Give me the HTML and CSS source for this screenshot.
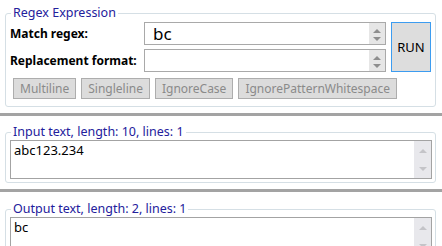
FILE: index.html
```html
<!DOCTYPE html>
<html lang="en">
<head>
    <meta charset="UTF-8">
    <meta name="viewport" content="width=device-width, initial-scale=1.0">
    <title>Regex Tester</title>
    <link rel="stylesheet" href="styles.css">
</head>
<body>
    <div class="pane pane-regex">
        <fieldset class="group">
            <legend>Regex Expression</legend>
            <div class="regex-grid">
                <label class="field-label">Match regex:</label>
                <div class="spin-box">
                    <span class="spin-text big">bc</span>
                    <div class="spinner">
                        <span class="arrow up"></span>
                        <span class="arrow down"></span>
                    </div>
                </div>
                <button class="run">RUN</button>
                <label class="field-label">Replacement format:</label>
                <div class="spin-box">
                    <span class="spin-text"></span>
                    <div class="spinner">
                        <span class="arrow up"></span>
                        <span class="arrow down"></span>
                    </div>
                </div>
            </div>
            <div class="options">
                <button disabled>Multiline</button>
                <button disabled>Singleline</button>
                <button disabled>IgnoreCase</button>
                <button disabled>IgnorePatternWhitespace</button>
            </div>
        </fieldset>
    </div>

    <div class="splitter"></div>

    <div class="pane">
        <fieldset class="group">
            <legend>Input text, length: 10, lines: 1</legend>
            <div class="text-box">
                <div class="text-content">abc123.234</div>
                <div class="scrollbar">
                    <span class="arrow up"></span>
                    <span class="arrow down"></span>
                </div>
            </div>
        </fieldset>
    </div>

    <div class="splitter"></div>

    <div class="pane pane-output">
        <fieldset class="group">
            <legend>Output text, length: 2, lines: 1</legend>
            <div class="text-box">
                <div class="text-content">bc</div>
                <div class="scrollbar">
                    <span class="arrow up"></span>
                    <span class="arrow down"></span>
                </div>
            </div>
        </fieldset>
    </div>
</body>
</html>
```

FILE: styles.css
```css
html, body {
    height: 100%;
}
body {
    font-family: "Noto Sans", "Open Sans", sans-serif;
    font-size: 12px;
    color: #000;
    background-color: #fff;
    margin: 0;
    overflow: hidden;
}
.pane {
    padding: 8px 6px 6px 5px;
}
.pane-regex {
    padding-top: 5px;
}
.group {
    margin: 0;
    padding: 0 3px 3px 4px;
    border: 1px solid #d5dfe5;
    border-radius: 3px;
}
.pane-regex .group {
    padding: 1px 4px 7px 4px;
}
legend {
    color: #23209c;
    padding: 0 2px;
    margin-left: 1px;
    line-height: 16px;
    font-size: 12.5px;
}
.regex-grid {
    display: grid;
    grid-template-columns: 129px 242px 40px;
    grid-template-rows: 23px 23px;
    column-gap: 5px;
    row-gap: 4px;
}
.field-label {
    font-weight: bold;
    font-size: 12px;
    display: flex;
    align-items: center;
}
.spin-box {
    display: flex;
    border: 1px solid #a9a9a9;
    background-color: #fff;
}
.spin-text {
    flex: 1;
    padding-left: 8px;
    line-height: 21px;
}
.spin-text.big {
    font-size: 17px;
    line-height: 20px;
    padding-top: 1px;
}
.spinner {
    width: 16px;
    background-color: #e6e6e6;
    display: flex;
    flex-direction: column;
    align-items: center;
    justify-content: space-between;
    padding: 6px 0 3px;
}
.arrow {
    width: 0;
    height: 0;
    border-left: 4px solid transparent;
    border-right: 4px solid transparent;
}
.arrow.up {
    border-bottom: 4px solid #8e8e8e;
}
.arrow.down {
    border-top: 4px solid #8e8e8e;
}
.run {
    grid-column: 3;
    grid-row: 1 / 3;
    font-family: inherit;
    font-size: 13px;
    color: #000;
    background-color: #dddddd;
    border: 1px solid #3c9cf0;
    padding: 0;
}
.options {
    display: flex;
    gap: 5px;
    margin: 6px 0 0 3px;
}
.options button {
    font-family: inherit;
    font-size: 12px;
    height: 21px;
    padding: 0 6px;
    color: #8a8a8a;
    background-color: #dcdcdc;
    border: 1px solid #adadad;
}
.splitter {
    height: 3px;
    background-color: #a3a3a3;
}
.text-box {
    display: flex;
    height: 39px;
    box-sizing: border-box;
    border: 1px solid #a3a3a3;
}
.text-content {
    flex: 1;
    font-size: 13px;
    padding: 1px 3px;
    line-height: 17px;
}
.scrollbar {
    width: 17px;
    background-color: #e8e8ec;
    display: flex;
    flex-direction: column;
    align-items: center;
    justify-content: space-between;
    padding: 8px 0 7px;
}
.scrollbar .arrow.up {
    border-bottom-color: #c4c4c8;
}
.scrollbar .arrow.down {
    border-top-color: #c4c4c8;
}
.pane-output {
    padding-top: 9px;
}
```
